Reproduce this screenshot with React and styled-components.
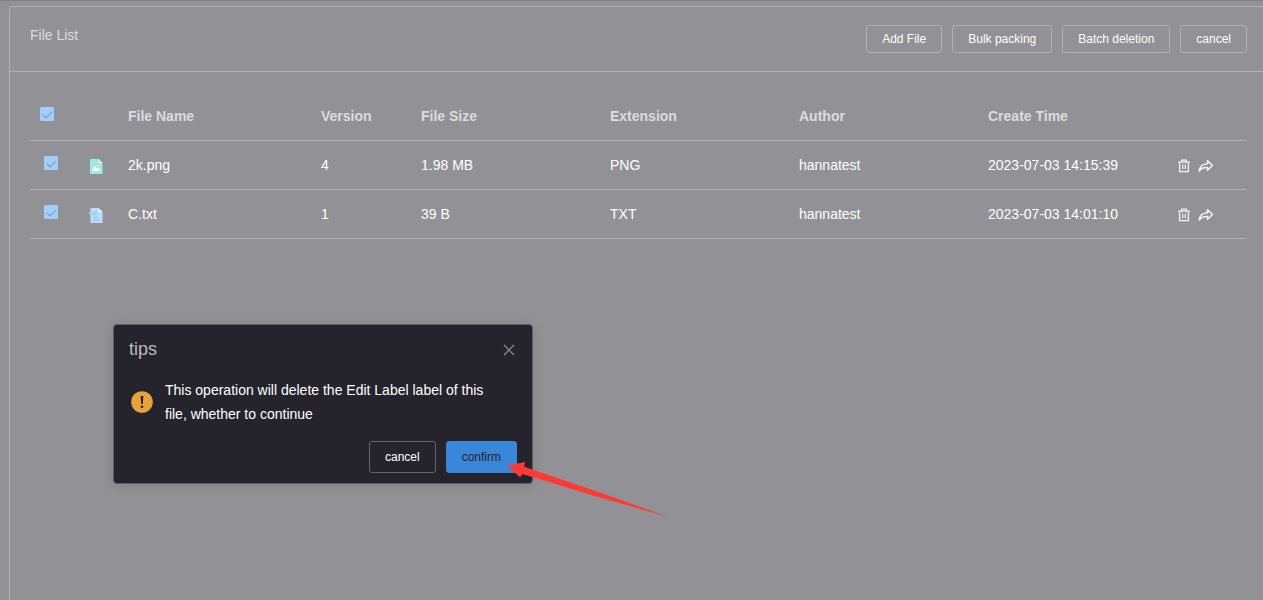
import React, { useState } from "react";
import styled, { createGlobalStyle } from "styled-components";

const GlobalStyle = createGlobalStyle`
  * {
    box-sizing: border-box;
  }

  body {
    margin: 0;
    background: #929196;
    color: #fff;
    font-family: "Liberation Sans", Arial, sans-serif;
    font-size: 14px;
    overflow: hidden;
  }
`;

const Page = styled.div`
  display: flex;
  flex-direction: column;
  min-height: 100vh;
  padding: 5px 0 0 9px;
  border-top: 1px solid #828182;
`;

const Panel = styled.section`
  flex: 1;
  border: 1px solid #b1b1b3;
  border-width: 1px 0 0 1px;
  border-radius: 4px 0 0 0;
`;

const PanelHeader = styled.header`
  display: flex;
  align-items: flex-start;
  justify-content: space-between;
  padding: 18px 16px 18px 20px;
  border-bottom: 1px solid #b1b1b3;
`;

const PanelTitle = styled.h1`
  margin: 0;
  color: #dcdcdd;
  font-size: 14px;
  font-weight: normal;
  line-height: 20px;
`;

const ButtonGroup = styled.div`
  display: flex;
  gap: 10px;
`;

const Button = styled.button`
  height: ${(props) => (props.$large ? "32px" : "28px")};
  padding: 0 15px;
  border: 1px solid ${(props) => (props.$large ? "#646469" : "#b1b1b3")};
  border-radius: 3px;
  background: transparent;
  color: #fff;
  font-family: inherit;
  font-size: 12px;
  font-weight: 500;
  cursor: pointer;
`;

const PrimaryButton = styled(Button)`
  border-color: #3a86d8;
  background: #3a86d8;
  color: #25242d;
`;

const PanelBody = styled.div`
  padding: 20px 16px 20px 20px;
`;

const Table = styled.table`
  width: 100%;
  table-layout: fixed;
  border-collapse: separate;
  border-spacing: 0;
`;

const Col = styled.col`
  width: ${(props) => props.$width || "auto"};
`;

const HeadCell = styled.th`
  height: 49px;
  padding: 0 12px;
  border-bottom: 1px solid #b1b1b3;
  color: #dcdcdd;
  text-align: left;
`;

const Cell = styled.td`
  height: 49px;
  padding: 0 12px;
  border-bottom: 1px solid #b1b1b3;
`;

const CheckHead = styled(HeadCell)`
  padding: 0 0 4px 10px;
`;

const CheckCell = styled(Cell)`
  padding: 0 0 4px 14px;
`;

const IconCell = styled(Cell)`
  padding: 2px 0 0 13px;
`;

const Checkbox = styled.input`
  appearance: none;
  display: grid;
  place-items: center;
  width: 14px;
  height: 14px;
  margin: 0;
  border: 1px solid #a0cfff;
  border-radius: 1px;
  cursor: pointer;

  &:checked {
    background: #a0cfff;
  }

  &:checked::after {
    content: "";
    width: 8px;
    height: 4px;
    margin-bottom: 2px;
    border: solid #87919f;
    border-width: 0 0 1px 1px;
    transform: rotate(-45deg);
  }
`;

const FileSvg = styled.svg`
  display: block;
  width: 14px;
  height: 15px;
`;

const Actions = styled.div`
  display: flex;
  align-items: center;
  gap: 7px;
  padding-top: 1px;
`;

const IconButton = styled.button`
  display: flex;
  padding: 0;
  border: 0;
  background: none;
  color: #f4f4f5;
  cursor: pointer;
`;

const Dialog = styled.div`
  position: absolute;
  top: 324px;
  left: 113px;
  width: 420px;
  padding: 13px 15px 10px;
  border: 1px solid #5e5e63;
  border-radius: 4px;
  background: #25242d;
  box-shadow: 0 2px 12px rgba(0, 0, 0, 0.12);
`;

const DialogHeader = styled.div`
  display: flex;
  align-items: center;
  justify-content: space-between;
  padding-right: 2px;
`;

const DialogTitle = styled.h2`
  margin: 0;
  color: #bcbcbf;
  font-size: 18px;
  font-weight: normal;
  line-height: 22px;
`;

const CloseButton = styled(IconButton)`
  padding-top: 2px;
  color: #909399;
`;

const DialogContent = styled.div`
  display: flex;
  align-items: center;
  gap: 12px;
  padding: 18px 20px 15px 2px;
`;

const WarningSvg = styled.svg`
  flex: none;
  width: 22px;
  height: 22px;
`;

const Message = styled.p`
  margin: 0;
  line-height: 24px;
`;

const DialogFooter = styled.div`
  display: flex;
  justify-content: flex-end;
  gap: 10px;
`;

const Arrow = styled.svg`
  position: absolute;
  top: 460px;
  left: 505px;
  pointer-events: none;
`;

const FILES = [
  {
    id: 1,
    name: "2k.png",
    version: 4,
    size: "1.98 MB",
    extension: "PNG",
    author: "hannatest",
    time: "2023-07-03 14:15:39",
  },
  {
    id: 2,
    name: "C.txt",
    version: 1,
    size: "39 B",
    extension: "TXT",
    author: "hannatest",
    time: "2023-07-03 14:01:10",
  },
];

const ImageFileIcon = () => (
  <FileSvg viewBox="0 0 14 15" aria-hidden="true">
    <path d="M1.500 0h8l4 4v11h-12a.5.5 0 0 1-.5-.5V.5a.5.5 0 0 1 .5-.5z" fill="#9fe9e2" />
    <path d="M9.500 0l4 4h-4z" fill="#dcf8f5" />
    <path d="M3.500 12v-1.700L6 7l2 2.700 1.200-1L11 10.500V12z" fill="#fff" />
    <circle cx="9.300" cy="6.500" r=".8" fill="#fff" />
  </FileSvg>
);

const TextFileIcon = () => (
  <FileSvg viewBox="0 0 14 15" aria-hidden="true">
    <path d="M2 0h7.500l4 4v11H2a.5.5 0 0 1-.5-.5V.5A.5.5 0 0 1 2 0z" fill="#b9defd" />
    <path d="M9.500 0l4 4h-4z" fill="#e6f3ff" />
    <path d="M0 3.500h8.500V7h-7L0 6z" fill="#a5c6f8" />
    <path d="M1 5h1.500M4 5h1M6.500 5h1" stroke="#e3efff" />
    <path d="M4 9.500h4.500M4 12h7" stroke="#8fb9ee" strokeWidth=".9" />
  </FileSvg>
);

const TrashIcon = () => (
  <svg width="14" height="14" viewBox="0 0 14 14" fill="none" stroke="currentColor" aria-hidden="true">
    <path d="M1 3.200h12M4.700 3V1.200h4.600V3" strokeWidth="1.300" />
    <path d="M2.600 3.500v9.200h8.800V3.500" strokeWidth="1.300" />
    <path d="M5.700 5.500v4.700M8.300 5.500v4.700" strokeWidth="1.200" />
  </svg>
);

const ShareIcon = () => (
  <svg width="16" height="14" viewBox="0 0 16 14" fill="none" stroke="currentColor" aria-hidden="true">
    <path
      d="M9.500 1.800l5 4.700-5 4.700V8.600C5.500 8.400 3 9.300 1.300 12 1.600 8 4.500 5 9.500 4.700z"
      strokeWidth="1.500"
      strokeLinejoin="round"
    />
  </svg>
);

const CloseIcon = () => (
  <svg width="12" height="12" viewBox="0 0 12 12" stroke="currentColor" aria-hidden="true">
    <path d="M1 1l10 10M11 1L1 11" strokeWidth="1.100" />
  </svg>
);

const WarningIcon = () => (
  <WarningSvg viewBox="0 0 22 22" aria-hidden="true">
    <circle cx="11" cy="11" r="10.800" fill="#e6a23c" />
    <path d="M9.700 5h2.600l-.5 8h-1.600z" fill="#25242d" />
    <circle cx="11" cy="15.700" r="1.300" fill="#25242d" />
  </WarningSvg>
);

const FileRow = ({ file, checked, onToggle, onDelete }) => (
  <tr>
    <CheckCell>
      <Checkbox
        type="checkbox"
        aria-label={file.name}
        checked={checked}
        onChange={() => onToggle(file.id)}
      />
    </CheckCell>
    <IconCell>
      {file.extension === "PNG" ? <ImageFileIcon /> : <TextFileIcon />}
    </IconCell>
    <Cell>{file.name}</Cell>
    <Cell>{file.version}</Cell>
    <Cell>{file.size}</Cell>
    <Cell>{file.extension}</Cell>
    <Cell>{file.author}</Cell>
    <Cell>{file.time}</Cell>
    <Cell>
      <Actions>
        <IconButton type="button" aria-label="Delete" onClick={onDelete}>
          <TrashIcon />
        </IconButton>
        <IconButton type="button" aria-label="Share">
          <ShareIcon />
        </IconButton>
      </Actions>
    </Cell>
  </tr>
);

const App = () => {
  const [selected, setSelected] = useState(FILES.map((file) => file.id));
  const [open, setOpen] = useState(true);

  const allSelected = selected.length === FILES.length;
  const close = () => setOpen(false);

  const toggleAll = () =>
    setSelected(allSelected ? [] : FILES.map((file) => file.id));

  const toggle = (id) =>
    setSelected(
      selected.includes(id)
        ? selected.filter((item) => item !== id)
        : [...selected, id]
    );

  return (
    <>
      <GlobalStyle />
      <Page>
        <Panel>
          <PanelHeader>
            <PanelTitle>File List</PanelTitle>
            <ButtonGroup>
              <Button type="button">Add File</Button>
              <Button type="button">Bulk packing</Button>
              <Button type="button" onClick={() => setOpen(true)}>
                Batch deletion
              </Button>
              <Button type="button">cancel</Button>
            </ButtonGroup>
          </PanelHeader>
          <PanelBody>
            <Table>
              <colgroup>
                <Col $width="46px" />
                <Col $width="40px" />
                <Col $width="193px" />
                <Col $width="100px" />
                <Col />
                <Col />
                <Col />
                <Col />
                <Col $width="82px" />
              </colgroup>
              <thead>
                <tr>
                  <CheckHead>
                    <Checkbox
                      type="checkbox"
                      aria-label="Select all"
                      checked={allSelected}
                      onChange={toggleAll}
                    />
                  </CheckHead>
                  <HeadCell />
                  <HeadCell>File Name</HeadCell>
                  <HeadCell>Version</HeadCell>
                  <HeadCell>File Size</HeadCell>
                  <HeadCell>Extension</HeadCell>
                  <HeadCell>Author</HeadCell>
                  <HeadCell>Create Time</HeadCell>
                  <HeadCell />
                </tr>
              </thead>
              <tbody>
                {FILES.map((file) => (
                  <FileRow
                    key={file.id}
                    file={file}
                    checked={selected.includes(file.id)}
                    onToggle={toggle}
                    onDelete={() => setOpen(true)}
                  />
                ))}
              </tbody>
            </Table>
          </PanelBody>
        </Panel>
      </Page>

      {open && (
        <Dialog role="dialog" aria-labelledby="dialog-title">
          <DialogHeader>
            <DialogTitle id="dialog-title">tips</DialogTitle>
            <CloseButton type="button" aria-label="Close" onClick={close}>
              <CloseIcon />
            </CloseButton>
          </DialogHeader>
          <DialogContent>
            <WarningIcon />
            <Message>
              This operation will delete the Edit Label label of this file,
              whether to continue
            </Message>
          </DialogContent>
          <DialogFooter>
            <Button type="button" $large onClick={close}>
              cancel
            </Button>
            <PrimaryButton type="button" $large onClick={close}>
              confirm
            </PrimaryButton>
          </DialogFooter>
        </Dialog>
      )}

      <Arrow width="166" height="60" viewBox="0 0 166 60" aria-hidden="true">
        <path
          d="M2 5.600L20 2l-.8 4.700L95 32.500 164 57 93 37 17.500 14 15 17.300z"
          fill="#ff3a36"
        />
      </Arrow>
    </>
  );
};

export default App;
